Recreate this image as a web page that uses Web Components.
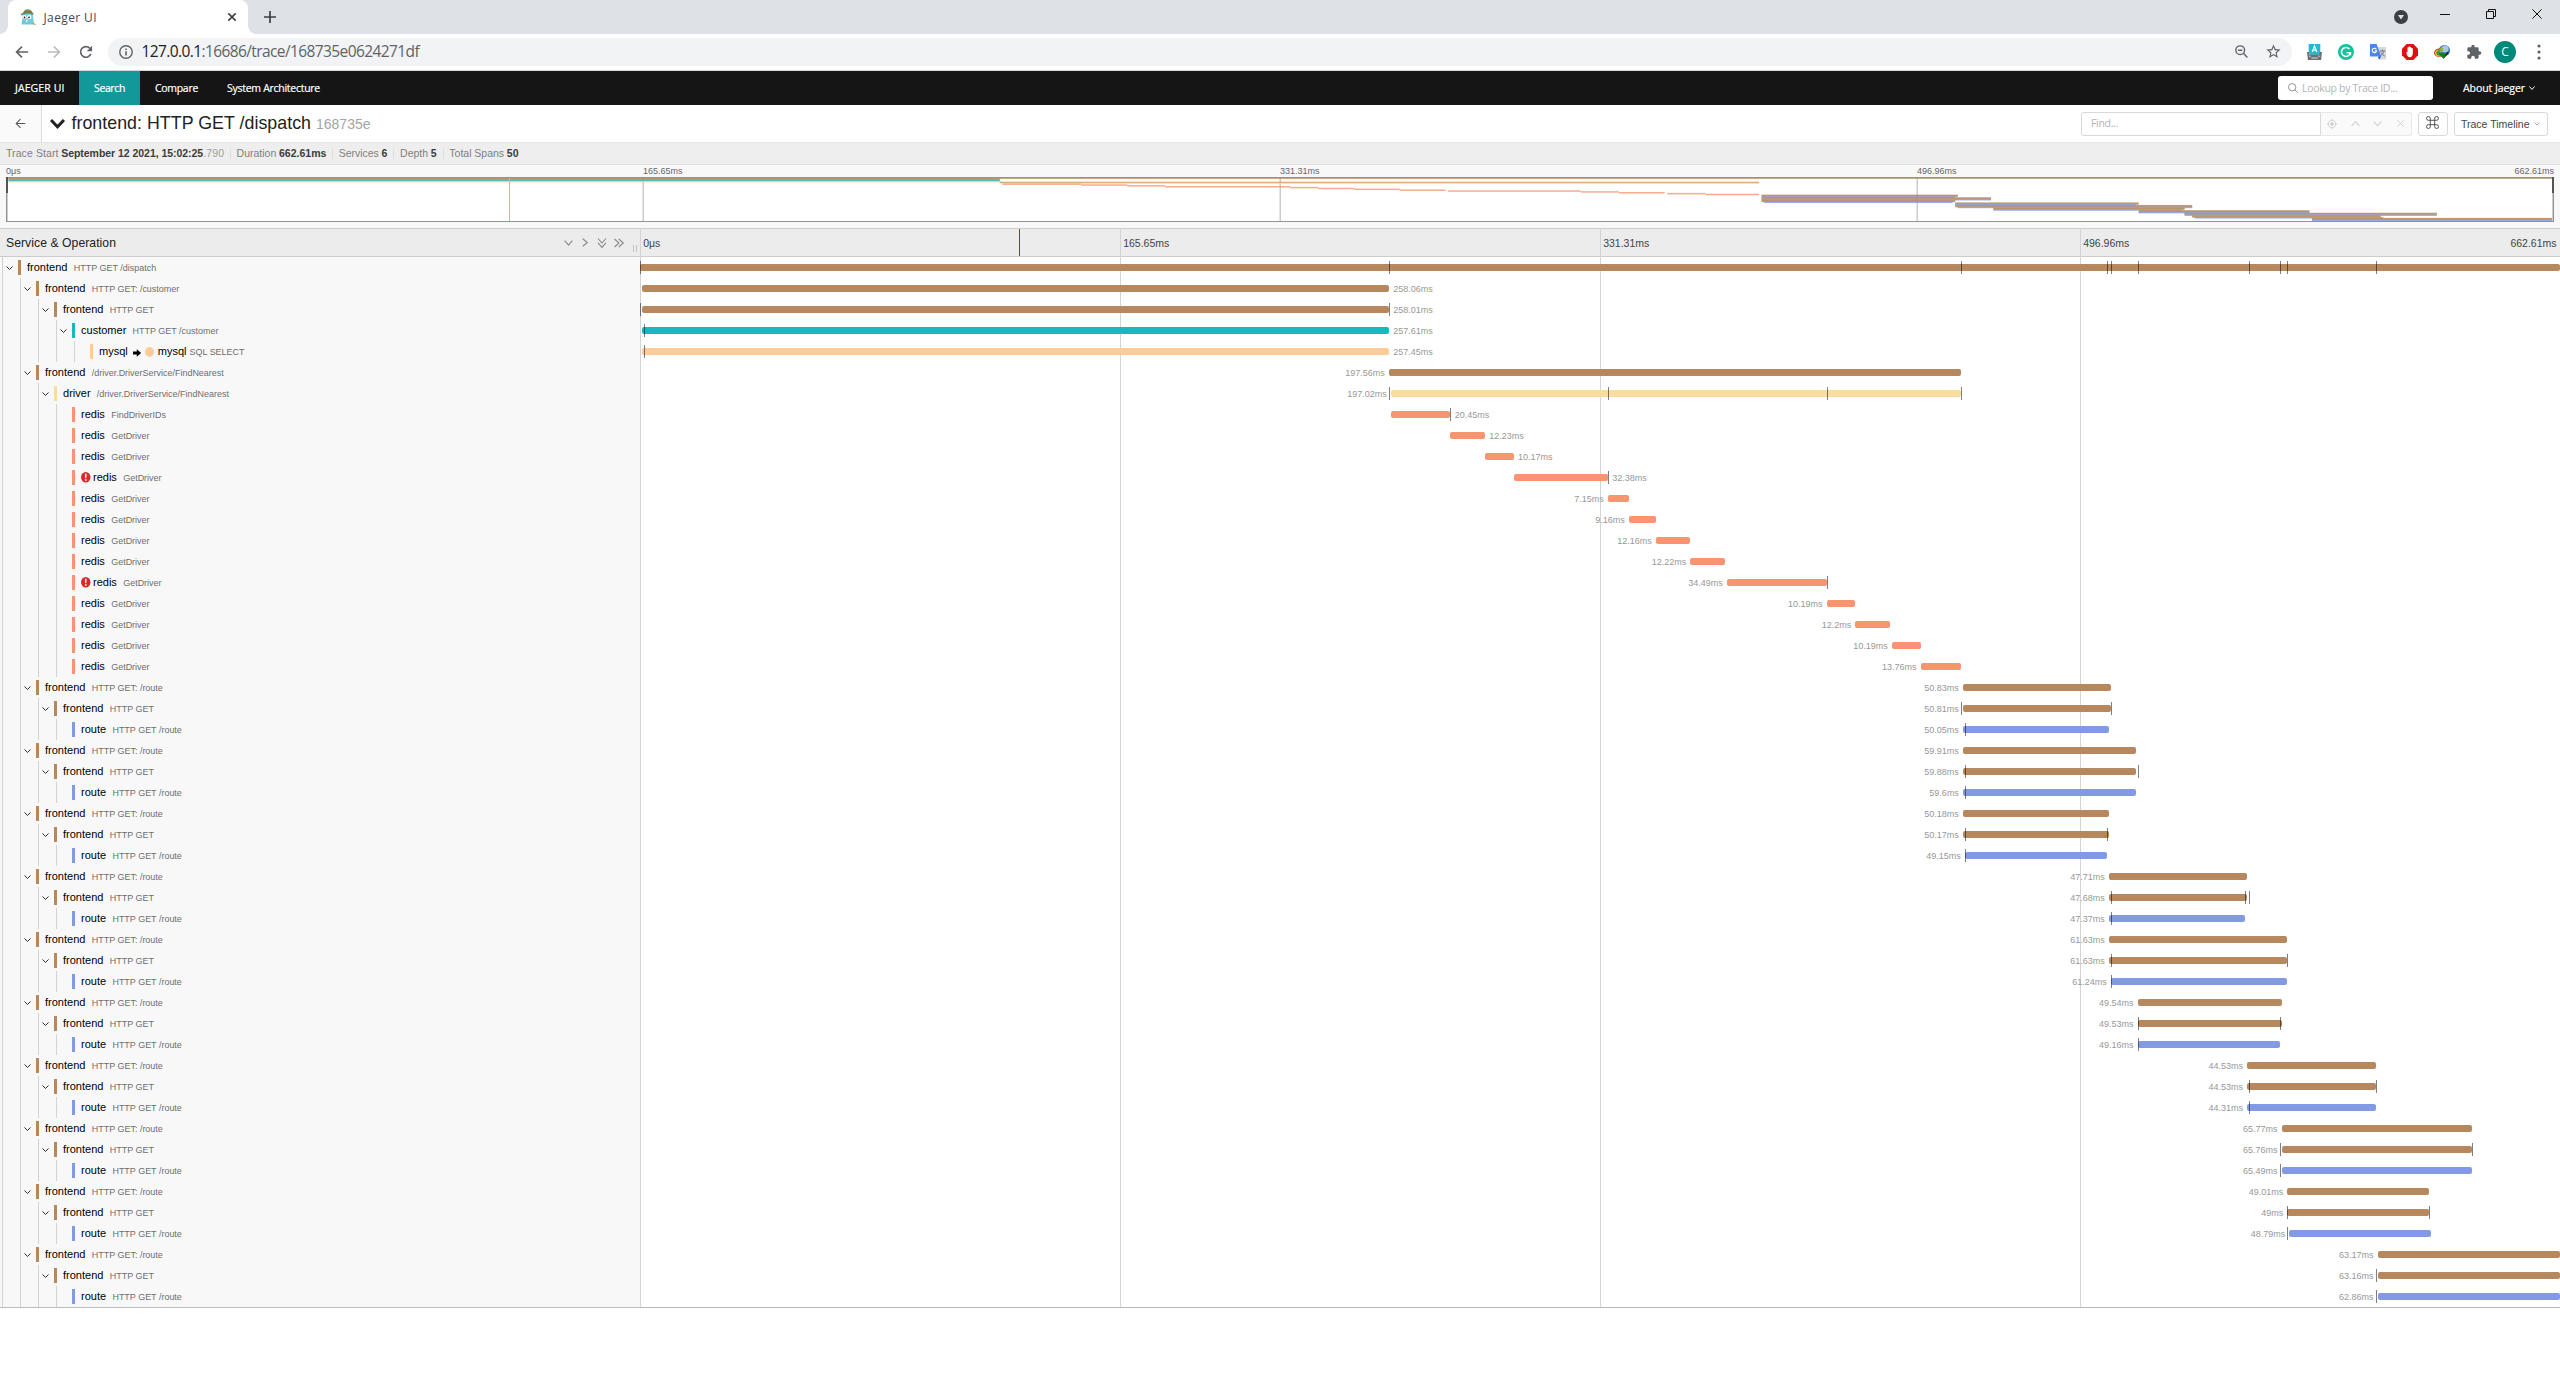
<!DOCTYPE html>
<html lang="en">
<head>
<meta charset="utf-8">
<title>Jaeger UI</title>
<style>
html,body{margin:0;padding:0;background:#fff}
body{width:2560px;height:1400px;overflow:hidden;font-family:"Liberation Sans",Arial,sans-serif}
</style>
</head>
<body>
<jaeger-app></jaeger-app>
<script>
const define = (name, html, after) => {
  const tpl = document.createElement('template');
  tpl.innerHTML = html;
  customElements.define(name, class extends HTMLElement {
    connectedCallback() {
      if (this.shadowRoot) return;
      this.attachShadow({mode: 'open'}).appendChild(tpl.content.cloneNode(true));
      if (after) after(this, this.shadowRoot);
    }
  });
};

/* Text run whose tracking is adjusted so that it takes `w` pixels. */
define('fit-text', `<style>:host{display:inline-block;white-space:pre;flex:none}</style><slot></slot>`, el => {
  const w = parseFloat(el.getAttribute('w'));
  if (!w) return;
  const n = el.textContent.length;
  el.style.letterSpacing = ((w - el.getBoundingClientRect().width) / n).toFixed(3) + 'px';
});

/* Icons: each is placed by its box in the flow of its bar. */
const ICONS = {
  back: ['0 0 16 16', '<path d="M15 8H2M8 1.8 1.8 8 8 14.2" fill="none" stroke="currentColor" stroke-width="var(--sw,1.9)"/>'],
  forward: ['0 0 16 16', '<path d="M1 8h13M8 1.8 14.2 8 8 14.2" fill="none" stroke="currentColor" stroke-width="1.9"/>'],
  reload: ['0 0 16 16', '<path d="M13.6 10.2A6.1 6.1 0 1 1 12.4 3.7L14 5.3" fill="none" stroke="currentColor" stroke-width="1.9"/><path d="M15 .9v6.2H8.8z" fill="currentColor"/>'],
  info: ['0 0 16 16', '<circle cx="8" cy="8" r="7.1" fill="none" stroke="currentColor" stroke-width="1.6"/><path d="M7.1 7h1.8v5H7.1zM7.1 4h1.8v1.8H7.1z" fill="currentColor"/>'],
  zoomout: ['0 0 14 14', '<circle cx="5.6" cy="5.6" r="4.7" fill="none" stroke="currentColor" stroke-width="1.5"/><path d="m9.2 9.2 4.2 4.2M3.3 5.6h4.6" stroke="currentColor" stroke-width="1.5"/>'],
  star: ['0 0 24 24', '<path d="m22 9.24-7.19-.62L12 2 9.19 8.63 2 9.24l5.46 4.73L5.82 21 12 17.27 18.18 21l-1.63-7.03zM12 15.4l-3.76 2.27 1-4.28-3.32-2.88 4.38-.38L12 6.1l1.71 4.04 4.38.38-3.32 2.88 1 4.28z" fill="currentColor"/>'],
  keyboard: ['0 0 16 16', '<path d="M0 8h16l-1 8H1z" fill="#6b6e72"/><path d="M2 10h2m1 0h2m1 0h2m1 0h2M2 12.3h2m8 0h2" stroke="#c9cbce" stroke-width="1.1"/><path d="M4.5 14h7" stroke="#e0e2e4" stroke-width="1"/><path d="M1.800 0h12.400v8.500L12 10.500H4L1.800 8.500z" fill="#21b9d3"/><path d="M5.6 8 8 2 10.4 8M6.4 6.200h3.200" fill="none" stroke="#fff" stroke-width="1.300"/>'],
  grammarly: ['0 0 16 16', '<circle cx="8" cy="8" r="8" fill="#15c39a"/><path d="M11.4 5A4.5 4.5 0 1 0 12.4 8.8H8.6M12.4 8.2v3" fill="none" stroke="#fff" stroke-width="1.5"/>'],
  translate: ['0 0 16 16', '<path d="M7 3h9v12.6H9z" fill="#d5d8dc"/><path d="M9.8 7h5.4M12.5 5.6V7M14 7c-.6 2.4-2 4-3.6 5M11 8.4c.8 1.8 2.2 3 3.8 3.7" stroke="#70757a" fill="none" stroke-width="1"/><path d="M0 0h6.6l4.6 12.6H0z" fill="#4a86f0"/><path d="M8 12.6h3.2L9 15.8z" fill="#2a56c6"/><path d="M6.3 5.2a2.2 2.2 0 1 0 .3 1.7H4.7" stroke="#fff" fill="none" stroke-width="1.1"/>'],
  adblock: ['0 0 16 16', '<path d="M4.7 0h6.6L16 4.7v6.6L11.3 16H4.7L0 11.3V4.7z" fill="#e40d0d"/><path d="M4.200 8.2 5.500 8V3.6q.6-.7 1.200 0V2.7q.6-.7 1.300 0v.6q.6-.6 1.300 0V4.400q.8-.6 1.500 0V9.500q-.2 3.700-3.100 3.700-1.800 0-2.600-1.900z" fill="#fff"/>'],
  idm: ['0 0 16 16', '<ellipse cx="5" cy="8.800" rx="5" ry="4.300" fill="#d8372c"/><ellipse cx="5.300" cy="9" rx="4.200" ry="3.500" fill="#f3c218"/><ellipse cx="6" cy="9" rx="3.600" ry="2.800" fill="#2f9e3c"/><circle cx="10.400" cy="6.500" r="5.600" fill="#3a6fb0"/><circle cx="11" cy="5" r="3.600" fill="#a8c8e8"/><path d="M7 3q3 1.600 2 4t-3.600 1q-.8-2.600 1.600-5z" fill="#8bb43a"/><path d="M4 9h9.500L9.500 15z" fill="#1f7a1a"/><path d="m13 7.500 1.800 1.500-5 5.600z" fill="#0e3f10"/>'],
  puzzle: ['0 0 24 24', '<path d="M20.500 11H19V7a2 2 0 0 0-2-2h-4V3.500a2.500 2.500 0 0 0-5 0V5H4a2 2 0 0 0-2 2v3.800h1.500a2.700 2.700 0 0 1 0 5.400H2V20a2 2 0 0 0 2 2h3.800v-1.500a2.700 2.700 0 0 1 5.400 0V22H17a2 2 0 0 0 2-2v-4h1.500a2.500 2.500 0 0 0 0-5z" fill="currentColor"/>'],
  dots: ['0 0 4 16', '<circle cx="2" cy="2" r="1.600" fill="currentColor"/><circle cx="2" cy="8" r="1.600" fill="currentColor"/><circle cx="2" cy="14" r="1.600" fill="currentColor"/>'],
  chip: ['0 0 14 14', '<circle cx="7" cy="7" r="7" fill="#3c4043"/><path d="M4 5h6L7 9.400z" fill="#dee1e6"/>'],
  min: ['0 0 10 10', '<path d="M0 5.500h10" stroke="currentColor"/>'],
  restore: ['0 0 10 10', '<path d="M.5 2.500h7v7h-7zM2.500 2.500v-2h7v7h-2" fill="none" stroke="currentColor"/>'],
  x: ['0 0 10 10', '<path d="m.4.4 9.200 9.200m0-9.200L.4 9.600" fill="none" stroke="currentColor" stroke-width="var(--sw,1)"/>'],
  plus: ['0 0 12 12', '<path d="M6 0v12M0 6h12" stroke="currentColor" stroke-width="1.700"/>'],
  search: ['0 0 10 10', '<circle cx="4.200" cy="4.200" r="3.700" fill="none" stroke="currentColor" stroke-width=".9"/><path d="m6.900 6.900 2.800 2.800" stroke="currentColor" stroke-width=".9"/>'],
  down: ['0 0 10 6', '<path d="m.7.7 4.300 4.500L9.300.7" fill="none" stroke="currentColor" stroke-width="var(--sw,1.500)"/>'],
  up: ['0 0 10 6', '<path d="M.7 5.300 5 .8l4.300 4.500" fill="none" stroke="currentColor" stroke-width="var(--sw,1.500)"/>'],
  right: ['0 0 6 10', '<path d="m.7.7 4.500 4.300L.7 9.300" fill="none" stroke="currentColor" stroke-width="var(--sw,1.500)"/>'],
  ddown: ['0 0 10 10', '<path d="M1 .5 5 5 9 .5M1 4.800l4 4.500 4-4.500" fill="none" stroke="currentColor" stroke-width="1.100"/>'],
  dright: ['0 0 10 10', '<path d="M.5 1 5 5 .5 9M4.800 1l4.500 4-4.500 4" fill="none" stroke="currentColor" stroke-width="1.100"/>'],
  aim: ['0 0 10 10', '<circle cx="5" cy="5" r="3.700" fill="none" stroke="currentColor" stroke-width=".8"/><circle cx="5" cy="5" r="1.800" fill="currentColor"/><path d="M5 0v1.500M5 8.500V10M0 5h1.500M8.500 5H10" stroke="currentColor" stroke-width="1"/>'],
  cmd: ['0 0 13 13', '<path d="M4.300 4.300V2.400A1.900 1.900 0 1 0 2.400 4.300h8.200a1.900 1.900 0 1 0-1.900-1.900v8.200a1.900 1.900 0 1 0 1.900-1.900H2.400a1.900 1.900 0 1 0 1.900 1.900z" fill="none" stroke="currentColor" stroke-width=".9"/>'],
  arrow: ['0 0 9 8', '<path d="M0 2.400h4V.3L8.600 4 4 7.700V5.600H0z" fill="currentColor"/>'],
  alert: ['0 0 10 10', '<circle cx="5" cy="5" r="5" fill="#db2828"/><path d="M4.100 1.600h1.800l-.3 4.300H4.400zM4.100 6.800h1.800v1.600H4.100z" fill="#fff"/>'],
  gopher: ['0 0 16 16', '<path d="M2.600 6Q3 3.500 8 3.500T13 7l1 8.500H1.600z" fill="#6fcbdc"/><path d="M.5 5.200 3.400 3.600Q4 .2 7.600.2t4.600 3l1.600 1.300-1 1.400Q7 3.400 1.400 6.400z" fill="#7b9560"/><path d="M3.400 3.700Q7.500 2 12.200 3.400" stroke="#5b6e3c" fill="none"/><circle cx="4.400" cy="8.200" r="2.100" fill="#fff"/><circle cx="9.300" cy="8" r="2.200" fill="#fff"/><circle cx="4.500" cy="8.500" r=".9" fill="#222"/><circle cx="9" cy="8.300" r=".9" fill="#222"/><ellipse cx="6.700" cy="10.600" rx="1.500" ry="1" fill="#d9b48c"/><path d="M6 11.300h1.500v1.400H6z" fill="#fff"/><path d="m12.500 14 3 1.600" stroke="#c79a6b" stroke-width="1.200"/>']
};
define('ui-icon', `<style>:host{display:block;flex:none}svg{display:block;width:100%;height:100%;overflow:visible}</style>`, (el, root) => {
  const [vb, body] = ICONS[el.getAttribute('name')];
  el.style.width = el.getAttribute('w') + 'px';
  el.style.height = (el.getAttribute('h') || el.getAttribute('w')) + 'px';
  root.innerHTML += `<svg viewBox="${vb}" preserveAspectRatio="none">${body}</svg>`;
});

define('browser-tabs', `<style>
:host{display:flex;height:34px;background:#dee1e6;align-items:flex-start;box-sizing:border-box;color:#45494d;font-family:"Open Sans",sans-serif}
.tab{display:flex;align-items:center;width:240px;height:34px;box-sizing:border-box;margin-left:8px;padding:0 12px;background:#fff;border-radius:8px 8px 0 0;position:relative}
.tab::before,.tab::after{content:"";position:absolute;bottom:0;width:8px;height:8px}
.tab::before{left:-8px;background:radial-gradient(circle at 0 0,#0000 7.500px,#fff 8px)}
.tab::after{right:-8px;background:radial-gradient(circle at 100% 0,#0000 7.500px,#fff 8px)}
.t{font-size:12px;line-height:35px;margin-left:7.500px}
.grow{flex:1}
.win{display:flex;align-items:flex-start;color:#111;margin-right:18px}
</style>
<div class="tab"><ui-icon name="gopher" w="16"></ui-icon><fit-text class="t" w="53.500">Jaeger UI</fit-text><span class="grow"></span><ui-icon name="x" w="8" style="--sw:2;color:#3c4043"></ui-icon></div>
<ui-icon name="plus" w="12" style="margin:11px 0 0 16px;color:#3c4043"></ui-icon>
<span class="grow"></span>
<div class="win"><ui-icon name="chip" w="14" style="margin:10px 32px 0 0"></ui-icon><ui-icon name="min" w="10" style="margin:9px 36px 0 0"></ui-icon><ui-icon name="restore" w="10" style="margin:9px 36px 0 0"></ui-icon><ui-icon name="x" w="10" style="margin-top:9px"></ui-icon></div>`);

define('browser-toolbar', `<style>
:host{display:flex;align-items:center;height:37px;box-sizing:border-box;padding:0 19px 1px 15px;background:#fff;border-bottom:1px solid #d3d6d8;color:#5f6368;font-family:"Open Sans",sans-serif}
.omni{display:flex;align-items:center;flex:1;height:28px;border-radius:14px;background:#f1f3f4;margin:0 15px;padding:0 11px;font-size:15.500px;line-height:27px}
.grow{flex:1}b{font-weight:400;color:#202124}
.ext{display:flex;align-items:center;gap:16px}
.c{width:22px;height:22px;border-radius:50%;background:#00897b;color:#fff;font:12px/22px "Open Sans",sans-serif;text-align:center;margin:0 -3px 0 -4px}
</style>
<ui-icon name="back" w="14"></ui-icon><ui-icon name="forward" w="14" style="margin-left:18px;color:#babcbe"></ui-icon><ui-icon name="reload" w="14" style="margin-left:18px"></ui-icon>
<div class="omni"><ui-icon name="info" w="14"></ui-icon><fit-text w="277.500" style="margin-left:8.500px"><b>127.0.0.1</b>:16686/trace/168735e0624271df</fit-text><span class="grow"></span><ui-icon name="zoomout" w="13"></ui-icon><ui-icon name="star" w="17" style="margin:0 -1px 0 17px"></ui-icon></div>
<div class="ext"><ui-icon name="keyboard" w="15" h="16"></ui-icon><ui-icon name="grammarly" w="16"></ui-icon><ui-icon name="translate" w="16"></ui-icon><ui-icon name="adblock" w="16"></ui-icon><ui-icon name="idm" w="16"></ui-icon><ui-icon name="puzzle" w="16"></ui-icon><div class="c">C</div><ui-icon name="dots" w="4" h="16" style="margin-left:8px"></ui-icon></div>`);

define('jaeger-nav', `<style>
:host{display:flex;height:34px;background:#151515;color:#fff;font:10.500px/34px "Open Sans",sans-serif;-webkit-text-stroke:.2px #fff}
.i{padding:0 15px;flex:none;height:34px;box-sizing:border-box}
.on{background:#199;width:61px}
.grow{flex:1}
.look{display:flex;align-items:center;box-sizing:border-box;width:155px;height:24px;margin:5px 30px 0 0;padding-left:10px;border-radius:3px;background:#fff;color:#b4b4b4;-webkit-text-stroke:0;line-height:24px}
.ab{display:flex;align-items:center;margin-right:25px}
</style>
<div class="i" style="width:79px"><fit-text w="49.500">JAEGER UI</fit-text></div><div class="i on"><fit-text w="31">Search</fit-text></div><div class="i" style="width:72px"><fit-text w="43">Compare</fit-text></div><div class="i"><fit-text w="93">System Architecture</fit-text></div>
<span class="grow"></span>
<div class="look"><ui-icon name="search" w="10" style="color:#888;margin-right:4px"></ui-icon><fit-text w="95.500">Lookup by Trace ID...</fit-text></div>
<div class="ab"><fit-text w="62">About Jaeger</fit-text><ui-icon name="down" w="6" h="4" style="margin-left:4px"></ui-icon></div>`);

define('trace-title', `<style>
:host{display:flex;align-items:center;height:38px;box-sizing:border-box;border-bottom:1px solid #e4e4e4;background:#fff;color:#222}
.back{display:flex;align-items:center;justify-content:center;width:42px;height:37px;box-sizing:border-box;background:#fafafa;border-right:1px solid #ddd;color:#555;align-self:flex-start}
h1{display:flex;align-items:baseline;margin:0 0 0 6.500px;font-weight:400;font-size:17.800px;line-height:36px}
small{font-size:14px;color:#a4a4a4}
.grow{flex:1}
.box{display:flex;align-items:center;box-sizing:border-box;height:24px;border:1px solid #d9d9d9;border-radius:3px;background:#fff}
.find{width:240px;border-radius:3px 0 0 3px;padding-left:9px;font:10.500px/23px "Open Sans",sans-serif;color:#b4b4b4}
.grp{width:91px;border-left:0;border-radius:0 3px 3px 0;background:#fafafa;border-color:#e8e8e8;color:#ccc;--sw:1.2;padding-left:5.500px;margin-right:6px}
.cmd{width:30px;justify-content:center;margin-right:6px;color:#444}
.tt{width:94px;padding-left:6px;margin-right:12px;font-size:10.500px;color:#444;--sw:1.200}
</style>
<div class="back"><ui-icon name="back" w="11" style="--sw:1.500"></ui-icon></div>
<ui-icon name="down" w="15" h="9" style="margin:0 0 0 8px;--sw:2"></ui-icon>
<h1><fit-text w="239.500">frontend: HTTP GET /dispatch</fit-text><small><fit-text w="54.500" style="margin-left:5px">168735e</fit-text></small></h1>
<span class="grow"></span>
<div class="box find"><fit-text w="27">Find...</fit-text></div><div class="box grp"><ui-icon name="aim" w="10"></ui-icon><ui-icon name="up" w="9" h="5.500" style="margin-left:14px"></ui-icon><ui-icon name="down" w="9" h="5.500" style="margin-left:13.500px"></ui-icon><ui-icon name="x" w="7" style="margin-left:14.500px"></ui-icon></div>
<div class="box cmd"><ui-icon name="cmd" w="13" style="margin:-2px 1px 0 0"></ui-icon></div><div class="box tt"><fit-text w="68.500">Trace Timeline</fit-text><ui-icon name="down" w="6" h="3.500" style="margin-left:4px;color:#888"></ui-icon></div>`);

define('trace-meta', `<style>
:host{display:flex;align-items:center;height:22px;box-sizing:border-box;background:#eee;border-bottom:1px solid #e0e0e0;padding-left:6px;font-size:10.500px;line-height:21px;color:#808080}
b{color:#3c3c3c;font-weight:700}i{width:1px;height:10px;background:#ddd;margin:0 5.700px}
fit-text{margin-right:2.700px}.n{margin:0}
</style>
<fit-text w="52.500">Trace Start</fit-text><fit-text class="n" w="142"><b>September 12 2021, 15:02:25</b></fit-text><fit-text class="n" w="21" style="color:#a0a0a0">.790</fit-text><i></i>
<fit-text w="39.700">Duration</fit-text><fit-text class="n" w="47.500"><b>662.61ms</b></fit-text><i></i>
<fit-text w="40">Services</fit-text><fit-text class="n" w="6.200"><b>6</b></fit-text><i></i>
<fit-text w="28">Depth</fit-text><fit-text class="n" w="6.200"><b>5</b></fit-text><i></i>
<fit-text w="54.700">Total Spans</fit-text><fit-text class="n" w="12"><b>50</b></fit-text>`);

const COLOR = {frontend: '#b7885e', customer: '#17b8be', mysql: '#ffcb99', driver: '#f8dca1', redis: '#f89570', route: '#829ae3'};
/* [depth, service, operation, start and width in thousandths of the trace, duration, log marks in px, error] */
const SPANS = [
  [0,'frontend','HTTP GET /dispatch',0,1000,'',[0,749,1321,1467,1471,1498,1609,1640,1647,1736]],
  [1,'frontend','HTTP GET: /customer',1,389,'258.06ms',[]],
  [2,'frontend','HTTP GET',1,389,'258.01ms',[0,749]],
  [3,'customer','HTTP GET /customer',1,389,'257.61ms',[4]],
  [4,'mysql','SQL SELECT',1,389,'257.45ms',[4]],
  [1,'frontend','/driver.DriverService/FindNearest',390,298,'197.56ms',[]],
  [2,'driver','/driver.DriverService/FindNearest',391,297,'197.02ms',[749,968,1187,1321]],
  [3,'redis','FindDriverIDs',391,31,'20.45ms',[810]],
  [3,'redis','GetDriver',422,18,'12.23ms',[]],
  [3,'redis','GetDriver',440,15,'10.17ms',[]],
  [3,'redis','GetDriver',455,49,'32.38ms',[968],1],
  [3,'redis','GetDriver',504,11,'7.15ms',[]],
  [3,'redis','GetDriver',515,14,'9.16ms',[]],
  [3,'redis','GetDriver',529,18,'12.16ms',[]],
  [3,'redis','GetDriver',547,18,'12.22ms',[]],
  [3,'redis','GetDriver',566,52,'34.49ms',[1187],1],
  [3,'redis','GetDriver',618,15,'10.19ms',[]],
  [3,'redis','GetDriver',633,18,'12.2ms',[]],
  [3,'redis','GetDriver',652,15,'10.19ms',[]],
  [3,'redis','GetDriver',667,21,'13.76ms',[]]
];
[
  [[689,77,'50.83ms'],[689,77,'50.81ms',1321,1471],[689,76,'50.05ms',1325]],
  [[689,90,'59.91ms'],[689,90,'59.88ms',1325,1498],[689,90,'59.6ms',1325]],
  [[689,76,'50.18ms'],[689,76,'50.17ms',1325,1467],[690,74,'49.15ms',1325]],
  [[765,72,'47.71ms'],[765,72,'47.68ms',1471,1605,1609],[765,71,'47.37ms',1471]],
  [[765,93,'61.63ms'],[765,93,'61.63ms',1471,1647],[766,92,'61.24ms',1471]],
  [[780,75,'49.54ms'],[780,75,'49.53ms',1498,1640],[780,74,'49.16ms',1498]],
  [[837,67,'44.53ms'],[837,67,'44.53ms',1609,1736],[837,67,'44.31ms',1609]],
  [[855,99,'65.77ms'],[855,99,'65.76ms',1640,1832],[855,99,'65.49ms',1640]],
  [[858,74,'49.01ms'],[858,74,'49ms',1647,1789],[859,74,'48.79ms',1647]],
  [[905,95,'63.17ms'],[905,95,'63.16ms',1736],[905,95,'62.86ms',1736]]
].forEach(g => g.forEach(([s, w, d, ...m], k) => SPANS.push(
  [k + 1, k < 2 ? 'frontend' : 'route', ['HTTP GET: /route', 'HTTP GET', 'HTTP GET /route'][k], s, w, d, m])));

define('trace-minimap', `<style>
:host{display:block;height:63px;box-sizing:border-box;background:#f8f8f8;padding:0 6px}
.lab{display:grid;grid-template-columns:repeat(4,1fr);height:12px;font-size:9px;line-height:12px;color:#666}
.lab>span:nth-child(4){display:flex;justify-content:space-between}
svg{display:block}
</style><div class="lab"><span>0μs</span><span>165.65ms</span><span>331.31ms</span><span><span>496.96ms</span><span>662.61ms</span></span></div>`, (el, root) => {
  let s = '<rect width="2548" height="45" fill="#fff"/>';
  for (const x of [637, 1274, 1911]) s += `<rect x="${x - .5}" width="1.5" height="45" fill="#ccc"/>`;
  SPANS.forEach((r, i) => {
    s += `<rect x="${(r[3] * 2.548).toFixed(2)}" y="${(.4 + i * .861).toFixed(2)}" width="${(r[4] * 2.548).toFixed(2)}" height="1.5" fill="${COLOR[r[1]]}" opacity=".8"/>`;
  });
  s += '<rect x="503" y="1" width="1" height="43" fill="#ff9c9c"/><rect x=".5" y=".5" width="2547" height="44" fill="none" stroke="#929292"/>' +
    '<rect x="0" width="2" height="16" fill="#555"/><rect x="2546" width="2" height="16" fill="#555"/><rect x="1" y="16" width="1" height="28" fill="#ccc"/><rect x="2546" y="16" width="1" height="28" fill="#ccc"/>';
  root.innerHTML += `<svg width="2548" height="45">${s}</svg>`;
});

define('timeline-header', `<style>
:host{display:flex;height:29px;box-sizing:border-box;background:#ececec;border-top:1px solid #ccc;border-bottom:1px solid #ccc;color:#444}
.l{display:flex;align-items:center;width:640px;box-sizing:border-box;padding-left:6px;font-size:12.200px;color:#222;line-height:28px}
.ic{display:flex;align-items:center;gap:8px;color:#888;margin-left:auto;--sw:1.200}
.grip{width:2px;height:7px;border:solid #c4c4c4;border-width:0 1px;margin:12px 3px 0 9px}
.r{display:grid;grid-template-columns:repeat(4,1fr);flex:1;font-size:10.500px;line-height:29px;height:27px;position:relative}
.r>span{border-left:1px solid #d4d4d4;padding-left:2.200px}
.r>span:nth-child(4){display:flex;justify-content:space-between;padding-right:3.500px}
.cur{position:absolute;left:379px;top:0;width:1px;height:27px;background:#e81010}
</style>
<div class="l"><fit-text w="110">Service &amp; Operation</fit-text><span class="ic"><ui-icon name="down" w="9" h="6"></ui-icon><ui-icon name="right" w="6" h="9" style="margin-left:1px"></ui-icon><ui-icon name="ddown" w="10" style="margin-left:1px"></ui-icon><ui-icon name="dright" w="10" style="margin-left:-1px"></ui-icon></span><span class="grip"></span></div>
<div class="r"><span>0μs</span><span>165.65ms</span><span>331.31ms</span><span><span>496.96ms</span><span>662.61ms</span></span><div class="cur"></div></div>`);

/* One span: the tree cell at the left, the bar with its duration and log marks at the right. */
define('span-row', `<style>
:host{display:flex;height:21px}
.n{display:flex;width:640px;flex:none;align-items:center;color:#000;font-size:11.025px;line-height:21px}
.g{width:18px;height:21px;flex:none;box-sizing:border-box;display:flex;align-items:center}
.g::before{content:"";width:1px;height:21px;background:#d3d3d3;margin:0 3px 0 2px}
.g ui-icon{margin-top:1px;color:#222}
.c{width:3px;height:15px;margin-right:6px;flex:none}
.t{display:flex;align-items:baseline;height:21px}
small{font-size:8.980px;color:#6e6e6e;margin-left:6.300px}
.d{width:9px;height:10px;border-radius:50%;margin:0 3.500px 0 4px}
.b{position:relative;display:flex;flex:1;min-width:0;height:21px;align-items:center;font-size:9px;line-height:21px;color:#989898;overflow:hidden}
.s{text-align:right;flex:none;box-sizing:border-box;padding-right:4px;white-space:nowrap;height:21px;line-height:22px}
.bar{height:7px;border-radius:2px;flex:none}
.e{padding-left:4.500px;height:21px;line-height:22px}
.m{position:absolute;top:4px;width:1px;height:13px;background:rgba(0,0,0,.5)}
</style>`, (el, root) => {
  const i = +el.getAttribute('index'), [depth, svc, op, s, w, dur, marks, err] = SPANS[i];
  const leaf = svc === 'redis' || svc === 'route' || svc === 'mysql', c = COLOR[svc];
  let g = '';
  for (let k = 0; k <= depth; k++) g += `<span class="g">${k === depth && !leaf ? '<ui-icon name="down" w="7" h="4" style="--sw:1.4"></ui-icon>' : ''}</span>`;
  const left = s > 1000 - s - w;
  const extra = svc === 'mysql' ? `<ui-icon name="arrow" w="8.500" h="8" style="margin:2px 0 0 5px"></ui-icon><span class="d" style="background:${c}"></span><div class="t"><span>mysql</span><small style="margin-left:3px">${op}</small></div>` : '';
  root.innerHTML += `<div class="n">${g}<span class="c" style="background:${c}"></span>` +
    (err ? '<ui-icon name="alert" w="9.500" h="10.500" style="margin:0 2.500px 0 0"></ui-icon>' : '') +
    `<div class="t"><span>${svc}</span>${extra ? '' : `<small>${op}</small>`}</div>${extra}</div>` +
    `<div class="b"><span class="s" style="width:${s / 10}%;${s < 10 ? 'padding:0' : ''}">${left && dur ? dur : ''}</span><span class="bar" style="width:${w / 10}%;background:${c}"></span>` +
    (!left && dur ? `<span class="e">${dur}</span>` : '') + marks.map(x => `<i class="m" style="left:${x}px"></i>`).join('') + '</div>';
});

define('span-list', `<style>
:host{display:block;border-bottom:1px solid #bbb;background:
 linear-gradient(#d4d4d4,#d4d4d4) 640px 0/1px 100% no-repeat,
 linear-gradient(#d4d4d4,#d4d4d4) 1120px 0/1px 100% no-repeat,
 linear-gradient(#d4d4d4,#d4d4d4) 1600px 0/1px 100% no-repeat,
 linear-gradient(#d4d4d4,#d4d4d4) 2080px 0/1px 100% no-repeat,
 linear-gradient(#f8f8f8,#f8f8f8) 0 0/640px 100% no-repeat,#fff}
</style>`, (el, root) => {
  root.innerHTML += SPANS.map((_, i) => `<span-row index="${i}"></span-row>`).join('');
});

define('jaeger-app', `<style>:host{display:flex;flex-direction:column;width:2560px;height:1400px;background:#fff}:host>*{flex:none}</style>
<browser-tabs></browser-tabs><browser-toolbar></browser-toolbar><jaeger-nav></jaeger-nav><trace-title></trace-title><trace-meta></trace-meta><trace-minimap></trace-minimap><timeline-header></timeline-header><span-list></span-list>`);
</script>
</body>
</html>
